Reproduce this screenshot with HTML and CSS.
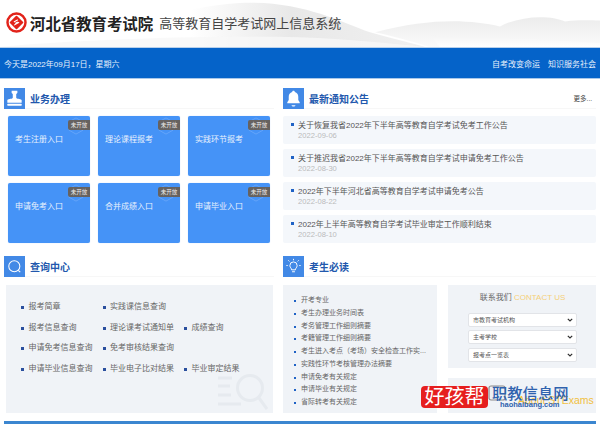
FILE: index.html
```html
<!DOCTYPE html>
<html lang="zh-CN">
<head>
<meta charset="utf-8">
<title>河北省教育考试院</title>
<link rel="stylesheet" href="styles.css">
</head>
<body>
<header class="top">
  <svg class="hills" viewBox="0 0 600 48" preserveAspectRatio="none">
    <defs>
      <linearGradient id="h1" x1="0" y1="0" x2="1" y2="0"><stop offset="0" stop-color="#fff"/><stop offset=".3" stop-color="#fff"/><stop offset=".6" stop-color="#e8e8e8"/><stop offset="1" stop-color="#f1f1f1"/></linearGradient>
      <linearGradient id="h2" x1="0" y1="0" x2="0" y2="1"><stop offset="0" stop-color="#ececec"/><stop offset="1" stop-color="#fbfbfb"/></linearGradient>
      <linearGradient id="h3" x1="0" y1="0" x2="0" y2="1"><stop offset="0" stop-color="#f4f4f4"/><stop offset="1" stop-color="#ffffff"/></linearGradient>
    </defs>
    <path d="M90 48C130 30 170 8 240 3C300 0 340 22 370 33C395 40 412 44 425 48Z" fill="url(#h1)"/>
    <path d="M0 48C60 42 180 36 300 38C350 40 390 44 425 48Z" fill="#f8f8f8" opacity=".8"/>
    <path d="M375 33C430 18 470 20 500 27C520 16 550 15 565 22C580 20 590 21 600 21V48H430C410 42 390 36 375 33Z" fill="url(#h2)"/>
    <path d="M430 36C480 38 550 40 600 44V48H440Z" fill="url(#h3)"/>
  </svg>
  <div class="brand">
    <svg class="logo" viewBox="0 0 24 24">
      <circle cx="12" cy="12" r="10.300" fill="none" stroke="#e2231a" stroke-width="2.800"/>
      <rect x="6.200" y="6.200" width="11.600" height="11.600" rx="1" fill="#e2231a" transform="rotate(45 12 12)"/>
      <path d="M9 11.500L13.500 8.800M9.300 15L15 11.700M10.500 13.200L13.500 11.500" stroke="#fff" stroke-width="1.200" fill="none"/>
    </svg>
    <span class="org">河北省教育考试院</span>
    <span class="sys">高等教育自学考试网上信息系统</span>
  </div>
</header>
<nav class="bar">
  <span>今天是2022年09月17日，星期六</span>
  <span class="bar-links"><span>自考改变命运</span><span>知识服务社会</span></span>
</nav>
<main class="grid">
  <section class="panel">
    <h2 class="head">
      <span class="ico"><svg viewBox="0 0 22 22"><path d="M8 3h6v2.200l-1.200 1.200v3.900c0 1.200 4.200 1 5.700 2.400v2.800h-15v-2.800c1.500-1.400 5.700-1.200 5.700-2.400V6.400L8 5.200z" fill="#fff"/><rect x="3.500" y="16.500" width="15" height="2" rx=".5" fill="#fff"/></svg></span>
      <span class="title">业务办理</span>
    </h2>
    <div class="cards">
      <a class="card"><svg class="hex" viewBox="0 0 20 20"><path d="M10 1l8 4.500v9L10 19l-8-4.500v-9z"/></svg>考生注册入口<em>未开放</em></a>
      <a class="card"><svg class="hex" viewBox="0 0 20 20"><path d="M10 1l8 4.500v9L10 19l-8-4.500v-9z"/></svg>理论课程报考<em>未开放</em></a>
      <a class="card"><svg class="hex" viewBox="0 0 20 20"><path d="M10 1l8 4.500v9L10 19l-8-4.500v-9z"/></svg>实践环节报考<em>未开放</em></a>
      <a class="card"><svg class="hex" viewBox="0 0 20 20"><path d="M10 1l8 4.500v9L10 19l-8-4.500v-9z"/></svg>申请免考入口<em>未开放</em></a>
      <a class="card"><svg class="hex" viewBox="0 0 20 20"><path d="M10 1l8 4.500v9L10 19l-8-4.500v-9z"/></svg>合并成绩入口<em>未开放</em></a>
      <a class="card"><svg class="hex" viewBox="0 0 20 20"><path d="M10 1l8 4.500v9L10 19l-8-4.500v-9z"/></svg>申请毕业入口<em>未开放</em></a>
    </div>
  </section>
  <section class="panel">
    <h2 class="head">
      <span class="ico"><svg viewBox="0 0 22 22"><path d="M11 3c.8 0 1.300.5 1.400 1.200 2.300.6 3.600 2.500 3.600 5v3.500l1.500 2.300v1H4.500v-1L6 12.700V9.200c0-2.500 1.300-4.400 3.600-5C9.700 3.500 10.200 3 11 3z" fill="#fff"/><path d="M9 18h4c-.2 1-1 1.500-2 1.500S9.200 19 9 18z" fill="#fff"/></svg></span>
      <span class="title">最新通知公告</span>
      <span class="more">更多...</span>
    </h2>
    <ul class="news">
      <li><p>关于恢复我省2022年下半年高等教育自学考试免考工作公告</p><time>2022-09-06</time></li>
      <li><p>关于推迟我省2022年下半年高等教育自学考试申请免考工作公告</p><time>2022-08-30</time></li>
      <li><p>2022年下半年河北省高等教育自学考试申请免考公告</p><time>2022-08-22</time></li>
      <li><p>2022年上半年高等教育自学考试毕业审定工作顺利结束</p><time>2022-08-10</time></li>
    </ul>
  </section>
  <section class="panel">
    <h2 class="head">
      <span class="ico"><svg viewBox="0 0 22 22"><circle cx="10.800" cy="10.800" r="5.800" fill="none" stroke="#fff" stroke-width="1.100"/><path d="M15 15l2 2" stroke="#fff" stroke-width="1.100"/></svg></span>
      <span class="title">查询中心</span>
    </h2>
    <div class="query">
      <svg class="query-mark" viewBox="0 0 50 38"><g fill="none" stroke="#e6eaef"><circle cx="32" cy="15" r="12.500" stroke-width="3"/><path d="M41 25l8 11" stroke-width="3"/><path d="M0 5h14M0 13h12M0 22h13M0 31h23" stroke-width="3"/></g></svg>
      <ul class="links">
        <li>报考简章</li><li>实践课信息查询</li><li class="blank"></li>
        <li>报考信息查询</li><li>理论课考试通知单</li><li>成绩查询</li>
        <li>申请免考信息查询</li><li>免考审核结果查询</li><li class="blank"></li>
        <li>申请毕业信息查询</li><li>毕业电子比对结果</li><li>毕业审定结果</li>
      </ul>
    </div>
  </section>
  <section class="panel">
    <h2 class="head">
      <span class="ico"><svg viewBox="0 0 22 22"><g fill="none" stroke="#fff" stroke-width="1"><path d="M9 14.500c0-1.800-1.800-2.300-1.800-4.500a3.800 3.800 0 0 1 7.600 0c0 2.200-1.800 2.700-1.800 4.500z"/><path d="M9.500 16.500h3M11 3v1.500M5.500 4.500l1.200 1.200M16.500 4.500l-1.200 1.200M3.500 10h1.500M17 10h1.500"/></g></svg></span>
      <span class="title">考生必读</span>
    </h2>
    <div class="must">
      <ul class="read">
        <li>开考专业</li>
        <li>考生办理业务时间表</li>
        <li>考务管理工作细则摘要</li>
        <li>考籍管理工作细则摘要</li>
        <li>考生进入考点（考场）安全检查工作实...</li>
        <li>实践性环节考核管理办法摘要</li>
        <li>申请免考有关规定</li>
        <li>申请毕业有关规定</li>
        <li>省际转考有关规定</li>
      </ul>
      <div class="side">
        <div class="contact">
          <h3>联系我们 <span>CONTACT US</span></h3>
          <select class="pick"><option>市教育考试机构</option></select>
          <select class="pick"><option>主考学校</option></select>
          <select class="pick"><option>报考点一览表</option></select>
        </div>
        <div class="about"><svg class="about-ico" viewBox="0 0 18 16"><rect x="1" y="1" width="16" height="14" rx="2" fill="#eef0f3" stroke="#8a8a8a" stroke-width="1.200"/></svg><span>About STExams</span></div>
      </div>
    </div>
  </section>
</main>
<div class="foot-line"></div>
<div class="stamp">
  <span class="stamp-red">好孩帮</span>
  <span class="stamp-blue">职教信息网<small>haohaibang.com</small></span>
</div>
</body>
</html>
```

FILE: styles.css
```css
* { box-sizing: border-box; }
html, body { margin: 0; padding: 0; }
body {
  width: 600px;
  height: 427px;
  overflow: hidden;
  position: relative;
  background: #fff;
  font-family: "Liberation Sans", "Noto Sans CJK SC", sans-serif;
  color: #555;
}
ul { list-style: none; margin: 0; padding: 0; }
h2, h3, p { margin: 0; font-weight: normal; }

.top {
  height: 48px;
  position: relative;
  background: #fff;
  border-bottom: 1px solid #b9d0ea;
}
.hills { position: absolute; inset: 0; width: 100%; height: 100%; }
.brand { position: relative; display: flex; align-items: center; height: 45px; padding-left: 6px; }
.logo { width: 21px; height: 21px; flex: none; }
.org { font-size: 15.400px; font-weight: 700; color: #222; margin-left: 3px; white-space: nowrap; }
.sys { font-size: 13px; color: #444; margin-left: 6px; white-space: nowrap; }

.bar {
  height: 31px;
  background: #0563c9;
  border-bottom: 1px solid #a9c8ea;
  color: #e6f0fb;
  font-size: 8px;
  display: flex;
  align-items: center;
  justify-content: space-between;
  padding: 0 4px;
}
.bar-links { display: flex; gap: 8px; }

.grid {
  display: grid;
  grid-template-columns: 270px 313px;
  grid-template-rows: 168px 157px;
  column-gap: 9px;
  padding: 9px 0 0 4px;
}
.head {
  display: flex;
  align-items: center;
  border-bottom: 1px solid #f7f7f7;
  height: 21px;
}
.ico { width: 21px; height: 21px; background: #4289e6; flex: none; display: block; }
.ico svg { width: 21px; height: 21px; display: block; }
.title { font-size: 10px; font-weight: 700; color: #2258ad; margin-left: 5px; }
.more { margin-left: auto; margin-right: 4px; font-size: 6.500px; color: #444; }

.cards {
  display: grid;
  grid-template-columns: repeat(3, 82px);
  grid-auto-rows: 60px;
  column-gap: 8px;
  row-gap: 7px;
  padding: 7px 0 0 4px;
}
.card {
  position: relative;
  background: #4593f7;
  border-radius: 2px;
  color: #e8f1fd;
  font-size: 8px;
  line-height: 11px;
  padding: 18px 0 0 7px;
  box-shadow: 0 0 1px #a9ccf7;
  overflow: hidden;
}
.hex { position: absolute; right: 5px; top: 1px; width: 18px; height: 18px; fill: none; stroke: #68a6f8; stroke-width: 1; }
.card em {
  position: absolute;
  right: 0;
  top: 4px;
  width: 22px;
  height: 10px;
  line-height: 10px;
  background: #666260;
  color: #eee;
  font-size: 5.500px;
  font-style: normal;
  text-align: center;
  border-radius: 2px 0 0 2px;
}

.news { padding: 7px 0 0; display: grid; gap: 5px; }
.news li {
  height: 28px;
  width: 313px;
  background: #f4f7fb;
  border-radius: 2px;
  padding: 4px 0 0 15px;
  position: relative;
  font-size: 8px;
  line-height: 11px;
}
.news li::before {
  content: "";
  position: absolute;
  left: 8px;
  top: 7px;
  width: 3px;
  height: 3px;
  background: #1f62c5;
}
.news p { color: #555; white-space: nowrap; }
.news time { display: block; color: #bbb; font-size: 7.600px; line-height: 10px; }

.query {
  position: relative;
  margin: 8px 0 0 2px;
  width: 267px;
  height: 128px;
  background: #f0f3f7;
}
.query-mark { position: absolute; left: 212px; top: 88px; width: 50px; height: 38px; }
.links {
  position: relative;
  display: grid;
  grid-template-columns: 81.500px 81.500px auto;
  grid-auto-rows: 20.700px;
  padding: 12px 0 0 15px;
  font-size: 8px;
  color: #666;
  white-space: nowrap;
}
.links li { padding-left: 7.500px; position: relative; line-height: 20.700px; }
.links li::before {
  content: "";
  position: absolute;
  left: 0;
  top: 9px;
  width: 3px;
  height: 3px;
  background: #2a4f9e;
}
.links li.blank::before { display: none; }

.must { display: flex; margin-top: 8px; gap: 11px; }
.read {
  width: 154px;
  height: 128px;
  background: #f0f3f7;
  padding: 9px 0 0 11px;
  font-size: 7px;
  color: #666;
  white-space: nowrap;
}
.read li { height: 12.750px; line-height: 12.750px; padding-left: 7px; position: relative; }
.read li::before {
  content: "";
  position: absolute;
  left: 0;
  top: 6px;
  width: 2px;
  height: 2px;
  background: #1f62c5;
}
.side { width: 148px; display: flex; flex-direction: column; gap: 10px; }
.contact { height: 83px; background: #f0f3f7; padding: 7px 0 0 20px; }
.contact h3 { font-size: 8px; color: #666; text-align: center; width: 109px; height: 12px; line-height: 12px; margin-bottom: 9px; }
.contact h3 span { color: #f5d078; }
.pick {
  display: block;
  appearance: none;
  -webkit-appearance: none;
  width: 109px;
  height: 14px;
  margin-bottom: 3.400px;
  padding: 0 0 0 4px;
  font: 6px "Liberation Sans", "Noto Sans CJK SC", sans-serif;
  color: #555;
  border: 1px solid #e2e4e8;
  border-radius: 2px;
  background: #fff url("data:image/svg+xml,%3Csvg xmlns='http://www.w3.org/2000/svg' width='6' height='4'%3E%3Cpath d='M.8.8L3 3l2.200-2.200' fill='none' stroke='%23333' stroke-width='1.200'/%3E%3C/svg%3E") no-repeat right 3px center;
}
.about { height: 35px; background: #f0f3f7; display: flex; align-items: flex-start; padding: 7px 0 0 40px; font-size: 10.500px; color: #f0c040; }
.about-ico { width: 18px; height: 16px; flex: none; }
.about span { margin: 9px 0 0 12px; line-height: 12px; white-space: nowrap; }

.foot-line { margin: 8px 4px 0; height: 3px; background: #3b86d0; }

.stamp { position: absolute; left: 421px; top: 386px; display: flex; align-items: flex-start; }
.stamp-red {
  background: #e61e1e;
  color: #fff;
  font-size: 20px;
  line-height: 22px;
  height: 22px;
  width: 67px;
  text-align: center;
  border-radius: 4px;
  white-space: nowrap;
}
.stamp-blue {
  color: #2f62ae;
  font-size: 15.300px;
  line-height: 15px;
  font-weight: 500;
  white-space: nowrap;
  margin-left: 4px;
  display: block;
}
.stamp-blue small { display: block; font-size: 7.500px; line-height: 8px; font-weight: 700; text-align: center; margin-left: -1px; }
```
